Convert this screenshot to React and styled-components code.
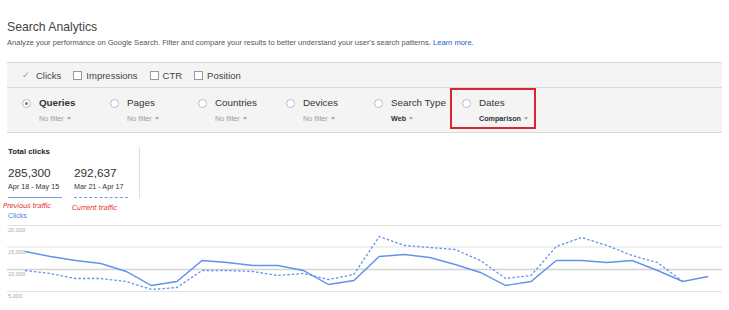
import React from "react";
import styled, { createGlobalStyle } from "styled-components";

const GlobalStyle = createGlobalStyle`
  body {
    margin: 0;
    background: #fff;
    font-family: "Liberation Sans", Arial, sans-serif;
    color: #333;
  }
`;

const Page = styled.div`
  width: 729px;
  height: 310px;
  overflow: hidden;
`;

const Header = styled.div`
  padding: 19px 7px 0;
`;

const Title = styled.h1`
  margin: 0;
  font-size: 12.2px;
  line-height: 16px;
  font-weight: normal;
  color: #444;
`;

const Subtitle = styled.p`
  margin: 3px 0 0;
  font-size: 7.55px;
  line-height: 9px;
  color: #555;
  white-space: nowrap;
`;

const Link = styled.a`
  color: #1a5fc4;
  text-decoration: none;
`;

const Panel = styled.div`
  margin: 15px 7px 0;
  background: #f4f4f4;
  border-top: 1px solid #d9d9d9;
  border-bottom: 1px solid #d9d9d9;
`;

const MetricsBar = styled.div`
  display: flex;
  align-items: center;
  gap: 12px;
  height: 24px;
  padding-left: 15px;
  border-bottom: 1px solid #d9d9d9;
`;

const MetricToggle = styled.label`
  display: flex;
  align-items: center;
  gap: 4px;
  font-size: 9.5px;
  color: #444;
`;

const Check = styled.span`
  width: 9px;
  font-size: 9px;
  color: #999;
  margin-right: 1px;
`;

const Box = styled.span`
  width: 7px;
  height: 7px;
  border: 1px solid #999;
  background: #fff;
`;

const FilterBar = styled.div`
  display: flex;
  height: 44px;
  padding: 9px 0 0 15px;
  box-sizing: border-box;
`;

const Filter = styled.div`
  position: relative;
  width: 88px;
  display: grid;
  grid-template-columns: 8px auto;
  column-gap: 9px;
  row-gap: 5px;
  align-content: start;

  ${(p) =>
    p.$highlight &&
    `
    &::after {
      content: "";
      position: absolute;
      top: -9px;
      left: -12px;
      width: 82px;
      height: 37px;
      border: 2px solid #d7262e;
    }
  `}
`;

const Radio = styled.span`
  width: 7px;
  height: 7px;
  margin-top: 2px;
  border-radius: 50%;
  border: 1px solid #bbb;
  background: #fff;
  display: flex;
  align-items: center;
  justify-content: center;

  &::after {
    content: "";
    width: 3px;
    height: 3px;
    border-radius: 50%;
    background: ${(p) => (p.$checked ? "#777" : "transparent")};
  }
`;

const FilterName = styled.span`
  font-size: 9.8px;
  line-height: 12px;
  font-weight: ${(p) => (p.$active ? "bold" : "normal")};
  color: #333;
  white-space: nowrap;
`;

const FilterValue = styled.span`
  grid-column: 2;
  font-size: 7.2px;
  line-height: 9px;
  color: ${(p) => (p.$strong ? "#333" : "#999")};
  font-weight: ${(p) => (p.$strong ? "bold" : "normal")};
  display: flex;
  align-items: center;
  gap: 3px;
`;

const Caret = styled.span`
  width: 0;
  height: 0;
  border-left: 2.5px solid transparent;
  border-right: 2.5px solid transparent;
  border-top: 3px solid #aaa;
`;

const Stats = styled.div`
  padding: 14px 0 0 8px;
`;

const Summary = styled.div`
  width: 132px;
  box-sizing: border-box;
  border-right: 1px solid #ddd;
`;

const SummaryTitle = styled.div`
  font-size: 7.8px;
  line-height: 10px;
  font-weight: bold;
  color: #222;
`;

const StatRow = styled.div`
  display: flex;
  gap: 12px;
  margin-top: 9px;
`;

const Stat = styled.div`
  width: 54px;
  padding-bottom: 5px;
  border-bottom: 1.5px ${(p) => (p.$dashed ? "dashed" : "solid")} #6e9de8;
`;

const StatValue = styled.div`
  font-size: 11.8px;
  line-height: 15px;
  color: #333;
`;

const StatRange = styled.div`
  margin-top: 1px;
  font-size: 7.2px;
  line-height: 10px;
  color: #333;
  white-space: nowrap;
`;

const Notes = styled.div`
  display: flex;
  align-items: flex-start;
  height: 10px;
  margin-top: 3px;
`;

const Note = styled.span`
  width: ${(p) => p.$w}px;
  margin-top: ${(p) => p.$dy || 0}px;
  margin-left: ${(p) => p.$dx || 0}px;
  font-size: 7px;
  line-height: 10px;
  font-style: italic;
  color: #e5332f;
  font-family: "DejaVu Sans", sans-serif;
  letter-spacing: -0.3px;
`;

const Legend = styled.div`
  margin-top: 1px;
  font-size: 7px;
  line-height: 8px;
  color: #4a7fdf;
`;

const Chart = styled.svg`
  display: block;
`;

const solid = [253, 258, 262, 265, 273, 287, 283, 262, 264, 267, 267, 272, 286, 282, 258, 256, 259, 266, 274, 287, 283, 262, 262, 264, 262, 272, 283, 278];
const dashed = [272, 275, 280, 280, 283, 291, 289, 272, 272, 273, 277, 275, 281, 276, 238, 247, 249, 251, 262, 280, 277, 248, 239, 247, 257, 264, 283];

// chart svg starts a little below y=220 on the page
const TOP = 221.5;

const toPoints = (ys) =>
  ys.map((y, i) => `${(25 + i * 25.3).toFixed(1)},${(y - TOP).toFixed(1)}`).join(" ");

const grid = [
  { y: 227, label: "20,000" },
  { y: 248.5, label: "15,000" },
  { y: 271, label: "10,000", strong: true },
  { y: 293, label: "5,000" },
];

const filters = [
  { name: "Queries", value: "No filter", checked: true },
  { name: "Pages", value: "No filter" },
  { name: "Countries", value: "No filter" },
  { name: "Devices", value: "No filter" },
  { name: "Search Type", value: "Web", strong: true },
  { name: "Dates", value: "Comparison", strong: true, highlight: true },
];

export default function App() {
  return (
    <Page>
      <GlobalStyle />
      <Header>
        <Title>Search Analytics</Title>
        <Subtitle>
          Analyze your performance on Google Search. Filter and compare your results to better understand your user's search patterns.{" "}
          <Link href="#">Learn more.</Link>
        </Subtitle>
      </Header>

      <Panel>
        <MetricsBar>
          <MetricToggle><Check>✓</Check>Clicks</MetricToggle>
          <MetricToggle><Box />Impressions</MetricToggle>
          <MetricToggle><Box />CTR</MetricToggle>
          <MetricToggle><Box />Position</MetricToggle>
        </MetricsBar>
        <FilterBar>
          {filters.map((f) => (
            <Filter key={f.name} $highlight={f.highlight}>
              <Radio $checked={f.checked} />
              <FilterName $active={f.checked}>{f.name}</FilterName>
              <FilterValue $strong={f.strong}>
                {f.value} <Caret />
              </FilterValue>
            </Filter>
          ))}
        </FilterBar>
      </Panel>

      <Stats>
        <Summary>
          <SummaryTitle>Total clicks</SummaryTitle>
          <StatRow>
            <Stat>
              <StatValue>285,300</StatValue>
              <StatRange>Apr 18 - May 15</StatRange>
            </Stat>
            <Stat $dashed>
              <StatValue>292,637</StatValue>
              <StatRange>Mar 21 - Apr 17</StatRange>
            </Stat>
          </StatRow>
        </Summary>
        <Notes>
          <Note $w={69} $dx={-5}>Previous traffic</Note>
          <Note $w={70} $dy={2}>Current traffic</Note>
        </Notes>
        <Legend>Clicks</Legend>
      </Stats>

      <Chart width="729" height="90" viewBox="0 0 729 90">
        {grid.map((g) => (
          <g key={g.label}>
            <line x1="7" x2="722" y1={g.y - TOP} y2={g.y - TOP} stroke={g.strong ? "#d4d4d4" : "#e2e2e2"} strokeWidth={g.strong ? 1.6 : 1} />
            <text x="8" y={g.y - TOP + 6.5} fontSize="5.6" fill="#aaa" fontFamily="Liberation Sans, Arial, sans-serif">{g.label}</text>
          </g>
        ))}
        <polyline points={toPoints(dashed)} fill="none" stroke="#6293ea" strokeWidth="1.3" strokeDasharray="2.5 2" />
        <polyline points={toPoints(solid)} fill="none" stroke="#6293ea" strokeWidth="1.4" />
      </Chart>
    </Page>
  );
}
